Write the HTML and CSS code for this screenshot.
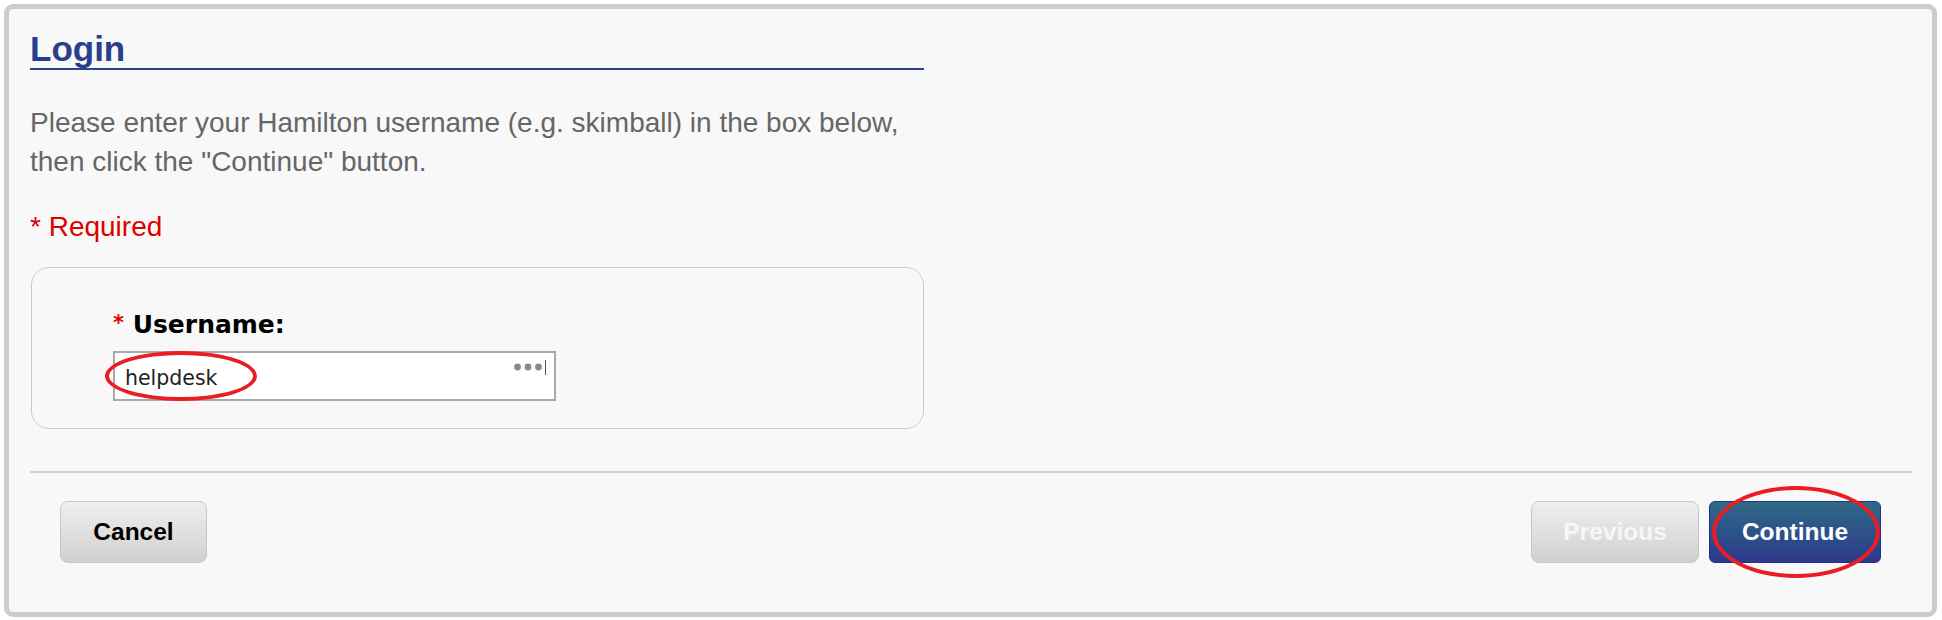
FILE: index.html
```html
<!DOCTYPE html>
<html lang="en">
<head>
<meta charset="utf-8">
<title>Login</title>
<link rel="stylesheet" href="styles.css">
</head>
<body>
<div class="panel">
  <h1 class="title">Login</h1>
  <p class="intro">Please enter your Hamilton username (e.g. skimball) in the box below,<br>then click the "Continue" button.</p>
  <p class="required">* Required</p>
  <div class="fieldset">
    <label class="label" for="username"><span class="star">*</span> Username:</label>
    <div class="field">
      <input class="input" id="username" type="text" value="helpdesk">
      <svg class="keyicon" width="33" height="17" viewBox="0 0 33 17" aria-hidden="true">
        <circle cx="3.5" cy="8" r="3.4" fill="#8a8a8a"/>
        <circle cx="14" cy="8" r="3.4" fill="#8a8a8a"/>
        <circle cx="24.5" cy="8" r="3.4" fill="#8a8a8a"/>
        <line x1="31.5" y1="1" x2="31.5" y2="16" stroke="#555" stroke-width="1"/>
      </svg>
      <span class="mark mark-field"></span>
    </div>
  </div>
  <div class="sep"></div>
  <div class="actions">
    <button class="btn btn-cancel" type="button">Cancel</button>
    <div class="nav">
      <button class="btn btn-prev" type="button" disabled>Previous</button>
      <div class="cont-wrap">
        <button class="btn btn-primary" type="button">Continue</button>
        <span class="mark mark-btn"></span>
      </div>
    </div>
  </div>
</div>
</body>
</html>
```

FILE: styles.css
```css
html, body {
  margin: 0;
  padding: 0;
  background: #ffffff;
}

.panel {
  box-sizing: border-box;
  margin: 4px 5px 0 4px;
  height: 613px;
  border: 5px solid #cccccc;
  border-radius: 9px;
  background: #f8f8f8;
  padding: 21px 20px 0 21px;
  font-family: "Liberation Sans", Arial, sans-serif;
}

.title {
  margin: 0;
  width: 894px;
  font-size: 35px;
  line-height: 38px;
  font-weight: bold;
  color: #2a3e8e;
  border-bottom: 2px solid #2a4290;
}

.intro {
  margin: 33px 0 0 0;
  font-size: 28px;
  line-height: 39px;
  color: #666666;
}

.required {
  margin: 26px 0 0 0;
  font-size: 28px;
  line-height: 39px;
  color: #dd0000;
}

.fieldset {
  box-sizing: border-box;
  margin-top: 21px;
  margin-left: 1px;
  width: 893px;
  height: 162px;
  border: 1px solid #cbcbcb;
  border-radius: 18px;
  padding: 40px 0 0 81px;
}

.label {
  display: block;
  font-family: "DejaVu Sans", Verdana, sans-serif;
  font-weight: bold;
  font-size: 25px;
  line-height: 30px;
  color: #000000;
}

.star {
  color: #dd0000;
  font-size: 21px;
  vertical-align: 3px;
}

.field {
  position: relative;
  margin-top: 11px;
  width: 443px;
  height: 50px;
}

.input {
  box-sizing: border-box;
  display: block;
  width: 443px;
  height: 50px;
  margin: 0;
  border: 2px solid #a9a9a9;
  padding: 4px 0 0 10px;
  background: #ffffff;
  font-family: "DejaVu Sans", Verdana, sans-serif;
  font-size: 20.5px;
  color: #222222;
  outline: none;
}

.keyicon {
  position: absolute;
  left: 401px;
  top: 8px;
}

.mark {
  position: absolute;
  box-sizing: border-box;
  border: 4px solid #ea1c24;
  border-radius: 50%;
  pointer-events: none;
}

.mark-field {
  left: -8px;
  top: 0;
  width: 152px;
  height: 50px;
}

.sep {
  margin-top: 42px;
  height: 2px;
  background: #d2d2d2;
}

.actions {
  display: flex;
  justify-content: space-between;
  align-items: center;
  margin-top: 28px;
  padding: 0 31px 0 30px;
}

.nav {
  display: flex;
  gap: 10px;
}

.cont-wrap {
  position: relative;
}

.btn {
  box-sizing: border-box;
  height: 62px;
  margin: 0;
  border: 1px solid #c6c6c6;
  border-radius: 8px;
  background: linear-gradient(#f0efef, #d0d0d0);
  font-family: "Liberation Sans", Arial, sans-serif;
  font-weight: bold;
  font-size: 24.5px;
  color: #000000;
  padding: 0;
}

.btn-cancel {
  width: 147px;
}

.btn-prev {
  width: 168px;
  color: #f7f7f7;
}

.btn-primary {
  display: block;
  width: 172px;
  border: 1px solid #262f88;
  border-radius: 6px;
  background: linear-gradient(#2e6a88, #2c3a8b);
  color: #ffffff;
}

.mark-btn {
  left: 3px;
  top: -15px;
  width: 168px;
  height: 92px;
}
```
